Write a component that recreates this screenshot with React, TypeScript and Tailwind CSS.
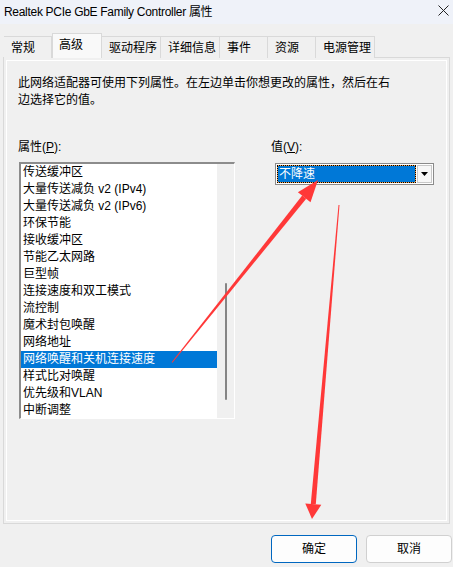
const items = [
  "传送缓冲区",
  "大量传送减负 v2 (IPv4)",
  "大量传送减负 v2 (IPv6)",
  "环保节能",
  "接收缓冲区",
  "节能乙太网路",
  "巨型帧",
  "连接速度和双工模式",
  "流控制",
  "魔术封包唤醒",
  "网络地址",
  "网络唤醒和关机连接速度",
  "样式比对唤醒",
  "优先级和VLAN",
  "中断调整",
];

const tabs = [
  { label: "常规", w: "w-[48px]" },
  { label: "高级", w: "w-[50px]", active: true },
  { label: "驱动程序", w: "w-[59px]" },
  { label: "详细信息", w: "w-[59px]" },
  { label: "事件", w: "w-[48px]" },
  { label: "资源", w: "w-[48px]" },
  { label: "电源管理", w: "w-[59px]" },
];

function Tab({ label, w, active }: { label: string; w: string; active?: boolean }) {
  return (
    <div
      className={
        active
          ? `relative z-10 h-[25px] ${w} border border-b-0 border-[#d9d9d9] bg-[#f9f9f9] pl-[6px] pt-[3px] leading-[16px]`
          : `h-[22px] ${w} border border-l-0 border-b-0 border-[#d9d9d9] bg-[#f0f0f0] pl-[7px] pt-[3px] leading-[16px]`
      }
    >
      {label}
    </div>
  );
}

export default function App() {
  return (
    <div className="relative h-[567px] w-[453px] overflow-hidden bg-[#f0f0f0] font-['Liberation_Sans','Noto_Sans_CJK_SC',sans-serif] text-[12px] text-black">
      {/* title bar */}
      <div className="flex h-[24px] items-center justify-between bg-[#eff2f9] pl-[4px] pr-[4px]">
        <span className="leading-[16px] tracking-[-0.3px]">Realtek PCIe GbE Family Controller 属性</span>
        <svg width="11" height="11" viewBox="0 0 11 11" className="mb-[3px]">
          <path d="M0.5 0.5 L10.5 10.5 M10.5 0.5 L0.5 10.5" stroke="#222" strokeWidth="1" />
        </svg>
      </div>

      {/* tabs */}
      <div className="mt-[9px] flex h-[25px] items-end pl-[4px]">
        {tabs.map((t) => (
          <Tab key={t.label} {...t} />
        ))}
      </div>

      {/* panel */}
      <div className="-mt-px ml-[3px] h-[467px] w-[447px] border border-[#d9d9d9] p-[2px]">
        <div className="h-full border border-white pl-[11px]">
          <p className="mt-[14px] w-[378px] leading-[17px]">
            此网络适配器可使用下列属性。在左边单击你想更改的属性，然后在右边选择它的值。
          </p>

          <div className="mt-[30px] flex">
            <div className="w-[253px]">
              <div className="leading-[17px]">
                属性(<span className="underline">P</span>):
              </div>
              <div className="ml-px mt-[6px] flex h-[257px] w-[216px] border-b border-l-2 border-r border-t-2 border-b-white border-l-[#8c8c8c] border-r-white border-t-[#8c8c8c] bg-white">
                <div className="w-[196px]">
                  {items.map((it) => (
                    <div
                      key={it}
                      className={
                        it === "网络唤醒和关机连接速度"
                          ? "h-[17px] whitespace-nowrap bg-[#0078d7] pl-[2px] leading-[17px] text-white"
                          : "h-[17px] whitespace-nowrap pl-[2px] leading-[17px]"
                      }
                    >
                      {it}
                    </div>
                  ))}
                </div>
                <div className="flex w-[17px] justify-center bg-[#f0f0f0]">
                  <div className="mt-[119px] h-[117px] w-[2px] rounded-full bg-[#858585]" />
                </div>
              </div>
            </div>

            <div>
              <div className="leading-[17px]">
                值(<span className="underline">V</span>):
              </div>
              <div className="ml-[4px] mt-[7px] flex h-[22px] w-[159px] border border-[#8a8a8a] bg-white p-px">
                <div className="w-[139px] bg-[#f5a04a]">
                  <div className="h-full border border-dotted border-black bg-[#0078d7] bg-clip-padding pl-px leading-[17px] text-white">
                    不降速
                  </div>
                </div>
                <div className="ml-px flex flex-1 items-center justify-center border border-[#c8c8c8] bg-[#f7f7f7]">
                  <svg width="7" height="4" viewBox="0 0 7 4">
                    <path d="M0 0 H7 L3.5 4 Z" fill="#000" />
                  </svg>
                </div>
              </div>
            </div>
          </div>
        </div>
      </div>

      {/* buttons */}
      <div className="mt-[11px] flex justify-end gap-[9px] pr-px">
        <button className="h-[28px] w-[86px] rounded-[4px] border border-[#0067c0] bg-[#fdfdfd] leading-[16px]">
          确定
        </button>
        <button className="h-[28px] w-[86px] rounded-[4px] border border-[#d0d0d0] bg-[#fdfdfd] leading-[16px]">
          取消
        </button>
      </div>

      {/* red annotation arrows */}
      <svg
        className="pointer-events-none absolute inset-0"
        width="453"
        height="567"
        viewBox="0 0 453 567"
      >
        <polygon
          points="171.6,362.3 172.4,362.7 306.2,198.8 302.2,195.6"
          fill="#ff3838"
        />
        <polygon points="318,180 310.5,202.2 297.9,192.2" fill="#ff3838" />
        <polygon
          points="338.5,205 339.5,205 315.8,504.3 310.8,503.9"
          fill="#ff3838"
        />
        <polygon points="312,519 321.3,504.8 305.3,503.4" fill="#ff3838" />
      </svg>
    </div>
  );
}
